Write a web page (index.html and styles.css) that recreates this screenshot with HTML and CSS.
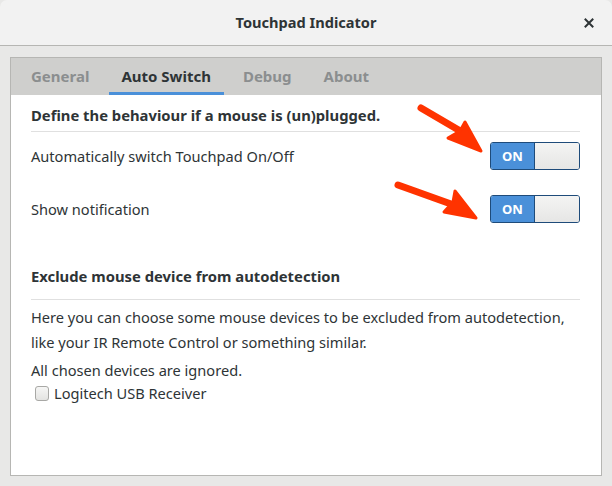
FILE: index.html
```html
<!DOCTYPE html>
<html>
<head>
<meta charset="utf-8">
<link rel="stylesheet" href="styles.css">
</head>
<body>
<div class="window">
  <div class="titlebar">
    <span class="title">Touchpad Indicator</span>
    <span class="close">
      <svg width="10" height="10" viewBox="0 0 10 10"><path d="M1.5 1.5 L8.5 8.5 M8.5 1.5 L1.5 8.5" stroke="#2e3436" stroke-width="2" stroke-linecap="square"/></svg>
    </span>
  </div>
  <div class="main">
    <div class="notebook">
      <div class="tabs">
        <div class="tab">General</div>
        <div class="tab active">Auto Switch</div>
        <div class="tab">Debug</div>
        <div class="tab">About</div>
      </div>
      <div class="page">
        <div class="heading">Define the behaviour if a mouse is (un)plugged.</div>
        <div class="row first">
          <span class="label">Automatically switch Touchpad On/Off</span>
          <div class="switch"><span class="on">ON</span><span class="knob"></span></div>
        </div>
        <div class="row">
          <span class="label">Show notification</span>
          <div class="switch"><span class="on">ON</span><span class="knob"></span></div>
        </div>
        <div class="heading second">Exclude mouse device from autodetection</div>
        <p class="desc">Here you can choose some mouse devices to be excluded from autodetection,<br>like your IR Remote Control or something similar.</p>
        <p class="note">All chosen devices are ignored.</p>
        <label class="check"><span class="box"></span>Logitech USB Receiver</label>
      </div>
    </div>
  </div>
  <svg class="arrows" width="612" height="486" viewBox="0 0 612 486">
    <g fill="#ff3300" stroke="#ff3300" stroke-linecap="round" stroke-linejoin="round">
      <path d="M421 108 L462 132" stroke-width="7" fill="none"/>
      <path d="M481 151 L465 122 L460 131 L448 138 Z" stroke-width="3"/>
      <path d="M398 185 L451 204" stroke-width="7" fill="none"/>
      <path d="M476 218 L455 191 L453 202 L444 212 Z" stroke-width="3"/>
    </g>
  </svg>
</div>
</body>
</html>
```
FILE: styles.css
```css
* { box-sizing: border-box; }
html, body { margin: 0; padding: 0; }
body {
  width: 612px;
  height: 486px;
  overflow: hidden;
  background: #e8e8e7;
  font-family: "Noto Sans", "Open Sans", sans-serif;
  font-size: 14.6px;
  color: #2e3436;
}
.window {
  position: relative;
  width: 612px;
  height: 486px;
  background: #e8e8e7;
}
.titlebar {
  height: 46px;
  background: #f2f2f2;
  border-bottom: 1px solid #b6b6b3;
  border-radius: 7px 7px 0 0;
  display: flex;
  align-items: center;
  justify-content: center;
  position: relative;
}
.title {
  font-weight: bold;
  font-size: 14.6px;
  color: #2e3436;
  margin-top: -2px;
}
.close {
  position: absolute;
  right: 18px;
  top: 18px;
  width: 10px;
  height: 10px;
  display: flex;
}
.main {
  padding: 11px 10px 10px 10px;
}
.notebook {
  height: 419px;
  border: 1px solid #b6b6b3;
  background: #ffffff;
  display: flex;
  flex-direction: column;
}
.tabs {
  height: 37px;
  background: #cfcfcd;
  display: flex;
  padding-left: 4px;
}
.tab {
  position: relative;
  padding: 0 16px 1px 16px;
  display: flex;
  align-items: center;
  font-weight: bold;
  font-size: 15px;
  color: #8b8e8f;
}
.tab.active {
  color: #2e3436;
}
.tab.active::after {
  content: "";
  position: absolute;
  left: 4px;
  right: 3px;
  bottom: 0;
  height: 3px;
  background: #4a90d9;
}
.page {
  padding: 10px 21px 0 20px;
}
.heading {
  font-weight: bold;
  font-size: 14.8px;
  padding-bottom: 6px;
  border-bottom: 1px solid #e0e0e0;
  line-height: 20px;
}
.heading.second {
  margin-top: 43px;
  padding-bottom: 13px;
}
.row {
  display: flex;
  align-items: center;
  justify-content: space-between;
  height: 28px;
  margin-top: 25px;
}
.row.first { margin-top: 10px; }
.label { line-height: 20px; }
.switch {
  width: 90px;
  height: 28px;
  border: 1px solid #1e4b7a;
  border-radius: 3px;
  display: flex;
  overflow: hidden;
  background: #e8e8e7;
}
.switch .on {
  width: 44px;
  background: #4a90d9;
  color: #ffffff;
  font-weight: bold;
  font-size: 13px;
  display: flex;
  align-items: center;
  justify-content: center;
  border-right: 1px solid #1e4b7a;
}
.switch .knob {
  flex: 1;
  background: linear-gradient(#f4f4f3, #e6e6e5);
}
.desc {
  margin: 5px 0 0 0;
  line-height: 25px;
}
.note {
  margin: 4px 0 0 0;
  line-height: 22px;
}
.check {
  display: flex;
  align-items: center;
  margin-left: 4px;
  margin-top: 1px;
  line-height: 22px;
}
.box {
  width: 14px;
  height: 15px;
  border: 1px solid #a8a8a5;
  border-radius: 3px;
  background: linear-gradient(#f6f6f5, #e3e3e1);
  margin-right: 5px;
}
.arrows {
  position: absolute;
  left: 0;
  top: 0;
  pointer-events: none;
}
```
